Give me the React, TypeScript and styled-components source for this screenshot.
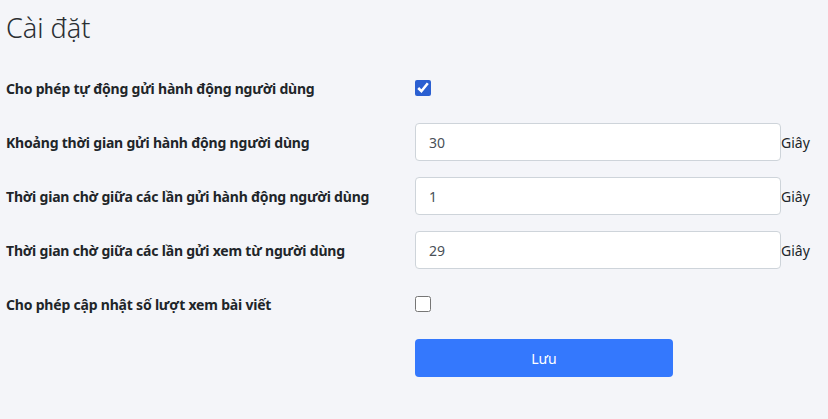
import React, { useState } from "react";
import styled, { createGlobalStyle } from "styled-components";

const Global = createGlobalStyle`
  html, body {
    margin: 0;
    padding: 0;
    background: #f4f5f9;
  }
  body {
    font-family: "Noto Sans", "Open Sans", sans-serif;
    color: #212529;
  }
`;

const Page = styled.div`
  padding: 11px 6px 0 6px;
  min-height: 419px;
  box-sizing: border-box;
`;

const Title = styled.h1`
  margin: 0 0 24px 0;
  font-size: 27px;
  font-weight: 300;
  line-height: 34px;
  color: #2b2f33;
`;

const Form = styled.div`
  display: grid;
  grid-template-columns: 409px auto;
  grid-auto-rows: 38px;
  row-gap: 16px;
  align-items: center;
`;

const Label = styled.label`
  font-size: 14px;
  font-weight: 700;
  letter-spacing: -0.2px;
  color: #212529;
`;

const Field = styled.div`
  display: flex;
  align-items: center;
`;

const Check = styled.input`
  width: 16px;
  height: 16px;
  margin: 0;
  accent-color: #2b5fd1;
`;

const NumberInput = styled.input`
  width: 366px;
  height: 38px;
  box-sizing: border-box;
  padding: 0 13px;
  border: 1px solid #ced4da;
  border-radius: 4px;
  background: #fff;
  font-family: inherit;
  font-size: 14px;
  color: #495057;
  outline: none;
`;

const Unit = styled.span`
  font-size: 14px;
  color: #212529;
`;

const SaveButton = styled.button`
  grid-column: 2;
  width: 258px;
  height: 38px;
  border: none;
  border-radius: 4px;
  background: #3478fd;
  color: #fff;
  font-family: inherit;
  font-size: 14px;
  cursor: pointer;
`;

export default function App() {
  const [autoSend, setAutoSend] = useState(true);
  const [updateViews, setUpdateViews] = useState(false);
  const [interval, setInterval] = useState("30");
  const [wait, setWait] = useState("1");
  const [viewWait, setViewWait] = useState("29");

  return (
    <Page>
      <Global />
      <Title>Cài đặt</Title>
      <Form>
        <Label>Cho phép tự động gửi hành động người dùng</Label>
        <Field>
          <Check type="checkbox" checked={autoSend} onChange={(e) => setAutoSend(e.target.checked)} />
        </Field>

        <Label>Khoảng thời gian gửi hành động người dùng</Label>
        <Field>
          <NumberInput value={interval} onChange={(e) => setInterval(e.target.value)} />
          <Unit>Giây</Unit>
        </Field>

        <Label>Thời gian chờ giữa các lần gửi hành động người dùng</Label>
        <Field>
          <NumberInput value={wait} onChange={(e) => setWait(e.target.value)} />
          <Unit>Giây</Unit>
        </Field>

        <Label>Thời gian chờ giữa các lần gửi xem từ người dùng</Label>
        <Field>
          <NumberInput value={viewWait} onChange={(e) => setViewWait(e.target.value)} />
          <Unit>Giây</Unit>
        </Field>

        <Label>Cho phép cập nhật số lượt xem bài viết</Label>
        <Field>
          <Check type="checkbox" checked={updateViews} onChange={(e) => setUpdateViews(e.target.checked)} />
        </Field>

        <SaveButton>Lưu</SaveButton>
      </Form>
    </Page>
  );
}
